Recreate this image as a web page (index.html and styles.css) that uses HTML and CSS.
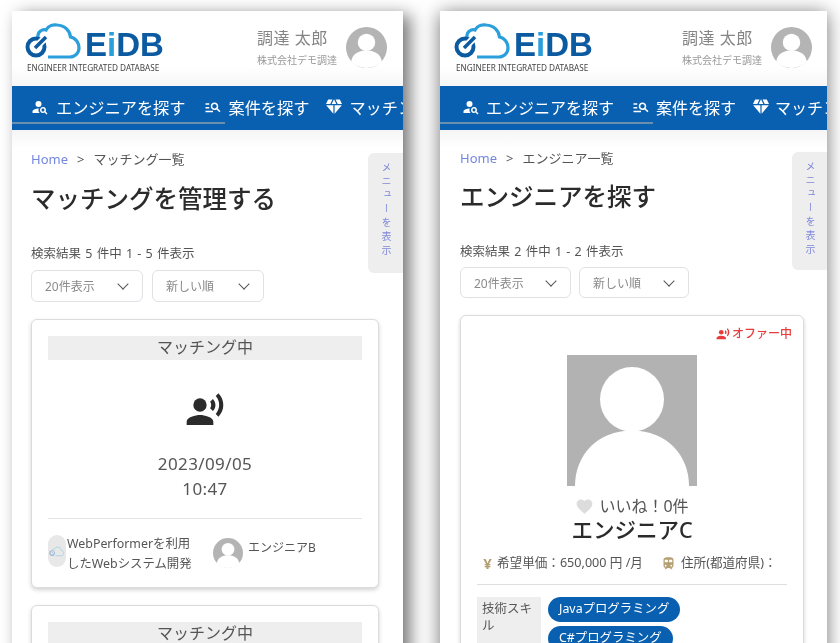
FILE: index.html
```html
<html>
	<head>
		<meta charset="utf-8">
		<title>EiDB</title>
		<link rel="stylesheet" href="styles.css">
	</head>
	<body>
		<svg class="defs" width="0" height="0">
			<symbol id="icoAvatar" viewBox="0 0 40 40">
				<circle cx="20" cy="20" r="20" fill="#b4b4b4"/>
				<circle cx="20" cy="15" r="8.5" fill="#fff"/>
				<path d="M5 34c1-8 8-11 15-11s14 3 15 11c-4 4-9 6-15 6s-11-2-15-6z" fill="#fff"/>
			</symbol>
			<symbol id="icoVoice" viewBox="0 0 24 24">
				<circle cx="9" cy="9" r="4"/>
				<path d="M9 15c-2.67 0-8 1.34-8 4v2h16v-2c0-2.66-5.33-4-8-4zm7.76-9.64l-1.68 1.69c.84 1.18.84 2.71 0 3.89l1.68 1.69c2.02-2.02 2.02-5.07 0-7.27zM20.07 2l-1.63 1.63c2.77 3.02 2.77 7.56 0 10.74L20.07 16c3.9-3.89 3.91-9.95 0-14z"/>
			</symbol>
			<symbol id="icoPerson" viewBox="0 0 24 24">
				<circle cx="10" cy="8" r="4"/>
				<path d="M10.35 14.01C7.62 13.91 2 15.27 2 18v2h9.54c-2.47-2.76-1.23-5.89-1.19-5.99zM19.43 18.02c.47-.8.7-1.77.51-2.82-.3-1.64-1.68-2.95-3.34-3.16-2.63-.34-4.85 1.87-4.5 4.5.22 1.66 1.52 3.04 3.16 3.34 1.05.19 2.02-.04 2.82-.51L20.59 22 22 20.59l-2.57-2.57zM16 18c-1.1 0-2-.9-2-2s.9-2 2-2 2 .9 2 2-.9 2-2 2z"/>
			</symbol>
			<symbol id="icoSearch" viewBox="0 0 24 24">
				<path d="M7 9H2V7h5v2zm0 3H2v2h5v-2zm13.59 7l-3.83-3.83c-.8.52-1.74.83-2.76.83-2.76 0-5-2.24-5-5s2.24-5 5-5 5 2.24 5 5c0 1.02-.31 1.96-.83 2.75L22 17.59 20.59 19zM17 11c0-1.65-1.35-3-3-3s-3 1.35-3 3 1.35 3 3 3 3-1.35 3-3zM2 19h10v-2H2v2z"/>
			</symbol>
			<symbol id="icoDiamond" viewBox="0 0 24 24">
				<path d="M12.16 3h-.32L9.21 8.25h5.58zm4.3 5.25h5.16L19 3h-5.16zm4.92 1.5h-8.63V20.1zM11.25 20.1V9.75H2.62zM7.54 8.25 10.16 3H5L2.38 8.25z"/>
			</symbol>
			<symbol id="icoLogo" viewBox="0 0 60 36">
				<path d="M14 15C13 8 19 6 22 7 24 3 29 1.5 33 2 41 2.5 46 8 46.5 14 52 15 55 20 55 25 55 30 51 34 46 34H24" fill="none" stroke="#2a9fdc" stroke-width="3.2"/>
				<circle cx="12" cy="24" r="8.5" fill="none" stroke="#0c5aa0" stroke-width="4"/>
				<path d="M12 24L23 13" fill="none" stroke="#fff" stroke-width="7"/>
				<path d="M11 25L22 14" fill="none" stroke="#0c5aa0" stroke-width="3.6"/>
			</symbol>
		</svg>

		<div class="screen screenA">
			<div class="head">
				<div class="logo">
					<div class="logoTop">
						<svg class="logoMark"><use href="#icoLogo"/></svg>
						<span class="logoName">E<i>i</i>DB</span>
					</div>
					<div class="logoSub">ENGINEER INTEGRATED DATABASE</div>
				</div>
				<div class="user">
					<div class="userText">
						<div class="userName">調達 太郎</div>
						<div class="userCorp">株式会社デモ調達</div>
					</div>
					<svg class="userPic"><use href="#icoAvatar"/></svg>
				</div>
			</div>
			<div class="nav">
				<div class="navItem navFirst"><svg class="navIco"><use href="#icoPerson"/></svg>エンジニアを探す</div>
				<div class="navItem"><svg class="navIco"><use href="#icoSearch"/></svg>案件を探す</div>
				<div class="navItem"><svg class="navIco navGem"><use href="#icoDiamond"/></svg>マッチング</div>
				<div class="navLine"></div>
			</div>
			<div class="content">
				<div class="sideTab">メニューを表示</div>
				<div class="crumb"><span class="crumbHome">Home</span><span class="crumbSep">&gt;</span>マッチング一覧</div>
				<h1 class="title">マッチングを管理する</h1>
				<div class="count">検索結果 5 件中 1 - 5 件表示</div>
				<div class="filters">
					<div class="select selectA">20件表示<span class="chev"></span></div>
					<div class="select selectB">新しい順<span class="chev"></span></div>
				</div>
				<div class="card matchCard">
					<div class="status">マッチング中</div>
					<svg class="voice"><use href="#icoVoice"/></svg>
					<div class="when">2023/09/05<br>10:47</div>
					<div class="cardRow">
						<div class="job">
							<div class="jobPic">
								<svg class="jobMark"><use href="#icoLogo"/></svg>
							</div>
							<div class="jobName">WebPerformerを利用したWebシステム開発</div>
						</div>
						<div class="eng">
							<svg class="engPic"><use href="#icoAvatar"/></svg>
							<div class="engName">エンジニアB</div>
						</div>
					</div>
				</div>
				<div class="card matchCard">
					<div class="status">マッチング中</div>
				</div>
			</div>
		</div>

		<div class="screen screenB">
			<div class="head">
				<div class="logo">
					<div class="logoTop">
						<svg class="logoMark"><use href="#icoLogo"/></svg>
						<span class="logoName">E<i>i</i>DB</span>
					</div>
					<div class="logoSub">ENGINEER INTEGRATED DATABASE</div>
				</div>
				<div class="user">
					<div class="userText">
						<div class="userName">調達 太郎</div>
						<div class="userCorp">株式会社デモ調達</div>
					</div>
					<svg class="userPic"><use href="#icoAvatar"/></svg>
				</div>
			</div>
			<div class="nav">
				<div class="navItem navFirst"><svg class="navIco"><use href="#icoPerson"/></svg>エンジニアを探す</div>
				<div class="navItem"><svg class="navIco"><use href="#icoSearch"/></svg>案件を探す</div>
				<div class="navItem"><svg class="navIco navGem"><use href="#icoDiamond"/></svg>マッチング</div>
				<div class="navLine"></div>
			</div>
			<div class="content">
				<div class="sideTab">メニューを表示</div>
				<div class="crumb"><span class="crumbHome">Home</span><span class="crumbSep">&gt;</span>エンジニア一覧</div>
				<h1 class="title">エンジニアを探す</h1>
				<div class="count">検索結果 2 件中 1 - 2 件表示</div>
				<div class="filters">
					<div class="select selectA">20件表示<span class="chev"></span></div>
					<div class="select selectB">新しい順<span class="chev"></span></div>
				</div>
				<div class="card engCard">
					<div class="offer"><svg class="offerIco"><use href="#icoVoice"/></svg>オファー中</div>
					<svg class="photo" viewBox="0 0 130 130" preserveAspectRatio="none">
						<rect width="130" height="130" fill="#b2b2b2"/>
						<circle cx="65" cy="44" r="32" fill="#fff"/>
						<path d="M8 130C8 100 30 75 65 75 100 75 122 100 122 130z" fill="#fff"/>
					</svg>
					<div class="like">
						<svg class="heart" viewBox="0 0 24 24"><path d="M12 21.35l-1.45-1.32C5.4 15.36 2 12.28 2 8.5 2 5.42 4.42 3 7.5 3c1.74 0 3.41.81 4.5 2.09C13.09 3.81 14.76 3 16.5 3 19.58 3 22 5.42 22 8.5c0 3.78-3.4 6.86-8.55 11.54L12 21.35z"/></svg>
						いいね！0件
					</div>
					<div class="engTitle">エンジニアC</div>
					<div class="meta">
						<span class="metaItem"><span class="yen">¥</span>希望単価：650,000 円 /月</span>
						<span class="metaItem"><svg class="train" viewBox="0 0 24 24"><path d="M12 2c-4 0-8 .5-8 4v9.5C4 17.43 5.57 19 7.5 19L6 20.5v.5h2.23l2-2H14l2 2h2v-.5L16.5 19c1.93 0 3.5-1.57 3.5-3.5V6c0-3.5-3.58-4-8-4zM7.5 17c-.83 0-1.5-.67-1.5-1.5S6.67 14 7.5 14s1.5.67 1.5 1.5S8.33 17 7.5 17zm3.5-7H6V6h5v4zm2 0V6h5v4h-5zm3.5 7c-.83 0-1.5-.67-1.5-1.5s.67-1.5 1.5-1.5 1.5.67 1.5 1.5-.67 1.5-1.5 1.5z"/></svg>住所(都道府県)：</span>
					</div>
					<div class="skills">
						<div class="skillLabel">技術スキル</div>
						<div class="skillList">
							<span class="pill">Javaプログラミング</span>
							<span class="pill">C#プログラミング</span>
						</div>
					</div>
				</div>
			</div>
		</div>
	</body>
</html>
```

FILE: styles.css
```css
html, body {
	margin: 0;
	width: 840px;
	height: 643px;
	overflow: hidden;
	background: #fff;
	font-family: "Noto Sans", "Noto Sans CJK JP", sans-serif;
	color: #444;
}
.defs {
	position: absolute;
}
.screen {
	position: absolute;
	top: 11px;
	height: 700px;
	background: #fff;
	filter: blur(0.45px);
}
.screenA {
	left: 12px;
	width: 391px;
	box-shadow: 7px 4px 16px rgba(0,0,0,0.55);
}
.screenB {
	left: 440px;
	width: 387px;
	box-shadow: 0 2px 18px rgba(0,0,0,0.55);
}

/* header */
.head {
	height: 75px;
	box-sizing: border-box;
	display: flex;
	justify-content: space-between;
	padding: 12px 16px 0 12px;
	background: linear-gradient(to bottom, #fff 75%, #f6f6f6);
}
.screenB .head {
	padding: 12px 15px 0 13px;
}
.logo {
	width: 140px;
}
.logoTop {
	display: flex;
	align-items: flex-end;
	height: 36px;
}
.logoMark {
	width: 60px;
	height: 36px;
	flex: none;
}
.logoName {
	margin: 0 0 -2px 1px;
	font-family: "Liberation Sans", sans-serif;
	font-weight: bold;
	font-size: 33px;
	line-height: 33px;
	color: #0c5aa0;
}
.logoName i {
	font-style: normal;
	color: #2a9fdc;
}
.logoSub {
	margin: 4px 0 0 3px;
	font-size: 8.2px;
	line-height: 10px;
	color: #444;
	white-space: nowrap;
}
.user {
	display: flex;
	gap: 9px;
	padding-top: 2px;
}
.userName {
	margin-top: 1px;
	font-size: 16px;
	line-height: 24px;
	color: #858585;
	letter-spacing: 0.5px;
}
.userCorp {
	margin-top: 3px;
	font-size: 10px;
	line-height: 14px;
	color: #999;
}
.userPic {
	width: 41px;
	height: 41px;
	margin-top: 2px;
}

/* nav */
.nav {
	position: relative;
	height: 44px;
	box-sizing: border-box;
	padding: 0 0 2px 19px;
	background: #0a60b0;
	color: #fff;
	display: flex;
	align-items: center;
	gap: 18px;
	font-size: 16.2px;
	white-space: nowrap;
	overflow: hidden;
}
.screenB .nav {
	padding-left: 22px;
	gap: 18px;
	font-size: 16px;
}
.navItem {
	display: flex;
	align-items: center;
	gap: 7px;
	flex: none;
}
.screenB .navItem {
	gap: 6px;
}
.navIco {
	width: 18px;
	height: 18px;
	fill: #fff;
}
.navGem {
	width: 20px;
	height: 20px;
	margin: 0 -2px 0 -3px;
}
.navLine {
	position: absolute;
	left: 0;
	bottom: 6px;
	width: 213px;
	height: 2px;
	background: #6b8fae;
}

/* content */
.content {
	position: relative;
	padding: 19px 24px 0 19px;
	background: linear-gradient(to bottom, #f5f5f5, #fff 18px);
}
.screenB .content {
	padding: 18px 23px 0 20px;
}
.sideTab {
	position: absolute;
	right: 0;
	top: 23px;
	width: 35px;
	height: 120px;
	box-sizing: border-box;
	padding-top: 9px;
	background: #eeeeee;
	border-radius: 6px 0 0 6px;
	color: #8088d8;
	font-size: 10px;
	line-height: 15px;
	writing-mode: vertical-rl;
	display: flex;
	align-items: center;
	letter-spacing: 3.8px;
}
.screenB .sideTab {
	top: 22px;
	height: 118px;
}
.crumb {
	font-size: 13px;
	line-height: 20px;
	color: #555;
}
.crumbHome {
	color: #7487e0;
}
.crumbSep {
	margin: 0 9px;
}
.title {
	margin: 12px 0 0;
	font-size: 24.5px;
	line-height: 36px;
	font-weight: 500;
	color: #2b2b2b;
}
.screenB .title {
	margin-top: 11px;
}
.count {
	margin-top: 28px;
	font-size: 12.5px;
	word-spacing: 1px;
	line-height: 18px;
	color: #555;
}
.filters {
	margin-top: 7px;
	display: flex;
	gap: 9px;
}
.screenB .filters {
	margin-top: 6px;
	gap: 8px;
}
.select {
	height: 32px;
	box-sizing: border-box;
	border: 1px solid #dfe1e5;
	border-radius: 6px;
	display: flex;
	align-items: center;
	justify-content: space-between;
	padding: 0 14px 0 13px;
	font-size: 12px;
	color: #8a8a8a;
}
.selectA {
	width: 112px;
}
.selectB {
	width: 112px;
}
.screenB .select {
	width: 111px;
	height: 31px;
}
.screenB .selectB {
	width: 110px;
}
.chev {
	width: 7px;
	height: 7px;
	margin: -4px 1px 0 0;
	border-right: 1.6px solid #555;
	border-bottom: 1.6px solid #555;
	transform: rotate(45deg);
}

/* cards */
.card {
	margin-top: 17px;
	border: 1px solid #dcdcdc;
	border-radius: 6px;
	box-shadow: 0 2px 4px rgba(0,0,0,0.18);
	background: #fff;
}
.matchCard {
	padding: 16px 16px 0;
	height: 269px;
	box-sizing: border-box;
	display: flex;
	flex-direction: column;
}
.status {
	height: 24px;
	line-height: 22px;
	background: #eeeeee;
	text-align: center;
	font-size: 16px;
	color: #555;
}
.voice {
	width: 40px;
	height: 40px;
	margin: 30px auto 0;
	fill: #2b2b2b;
}
.when {
	margin-top: 21px;
	padding-bottom: 17px;
	border-bottom: 1px solid #e4e4e4;
	text-align: center;
	font-size: 17px;
	letter-spacing: 0.4px;
	line-height: 25px;
	color: #555;
}
.cardRow {
	display: flex;
	margin-top: 16px;
}
.job {
	display: flex;
	width: 165px;
}
.jobPic {
	width: 18px;
	height: 32px;
	flex: none;
	border-radius: 9px;
	background: #e8e8e8;
	display: flex;
	align-items: center;
	justify-content: center;
}
.jobMark {
	width: 16px;
	height: 11px;
	opacity: 0.35;
}
.jobName {
	width: 128px;
	font-size: 12.4px;
	line-height: 19.5px;
	color: #555;
	margin: -1px 0 0 1px;
}
.eng {
	display: flex;
	gap: 5px;
}
.engPic {
	width: 30px;
	height: 30px;
	margin-top: 3px;
}
.engName {
	font-size: 12px;
	line-height: 18px;
	color: #555;
	margin-top: 4px;
}
.engCard {
	padding: 9px 16px 0;
	height: 400px;
	box-sizing: border-box;
}
.offer {
	display: flex;
	justify-content: flex-end;
	align-items: center;
	gap: 2px;
	font-size: 12px;
	line-height: 18px;
	font-weight: 500;
	color: #e83c3c;
	margin-right: -5px;
}
.offerIco {
	width: 14px;
	height: 14px;
	fill: #e83c3c;
}
.photo {
	display: block;
	width: 130px;
	height: 131px;
	margin: 12px auto 0;
}
.like {
	margin-top: 9px;
	display: flex;
	justify-content: center;
	align-items: center;
	gap: 5px;
	font-size: 16px;
	line-height: 22px;
	color: #555;
}
.heart {
	width: 19px;
	height: 19px;
	fill: #dcdcdc;
}
.engTitle {
	margin-top: -1px;
	text-align: center;
	font-size: 21.5px;
	line-height: 28px;
	font-weight: 500;
	color: #2b2b2b;
}
.meta {
	margin-top: 9px;
	padding: 0 4px 11px 0;
	border-bottom: 1px solid #dedede;
	display: flex;
	justify-content: center;
	gap: 18px;
	font-size: 12.6px;
	line-height: 20px;
	color: #555;
	white-space: nowrap;
}
.metaItem {
	display: flex;
	align-items: center;
	gap: 5px;
}
.yen {
	color: #b39f72;
	font-weight: bold;
	font-size: 15px;
}
.train {
	width: 15px;
	height: 15px;
	fill: #b39f72;
}
.skills {
	display: flex;
	gap: 7px;
	margin-top: 12px;
}
.skillLabel {
	width: 64px;
	height: 60px;
	box-sizing: border-box;
	padding: 3px 5px;
	background: #eeeeee;
	font-size: 12.5px;
	line-height: 17px;
	color: #555;
}
.skillList {
	display: flex;
	flex-direction: column;
	align-items: flex-start;
	gap: 4px;
}
.pill {
	height: 25px;
	line-height: 23px;
	padding: 0 11px;
	border-radius: 13px;
	background: #0a60b0;
	color: #fff;
	font-size: 12.4px;
}
```
